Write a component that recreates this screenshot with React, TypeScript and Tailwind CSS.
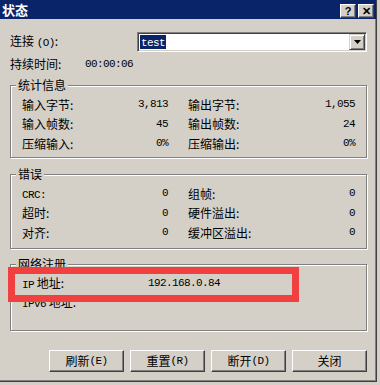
import React from "react";

const Mono = ({ children }: { children: React.ReactNode }) => (
  <span className="font-['Liberation_Mono',monospace] text-[11px] tracking-[-0.6px]">{children}</span>
);

function Group({
  title,
  className,
  children,
}: {
  title: string;
  className: string;
  children: React.ReactNode;
}) {
  return (
    <div
      className={`relative border border-[#808080] shadow-[1px_1px_0_#ffffff,inset_1px_1px_0_#ffffff] ${className}`}
    >
      <span className="absolute -top-[8px] left-[5px] bg-[#d4d0c8] px-[2px] leading-[14px]">{title}</span>
      {children}
    </div>
  );
}

function Cell({ label, value }: { label: React.ReactNode; value: string }) {
  return (
    <div className="flex h-[19.5px] items-center justify-between leading-none">
      <span>{label}</span>
      <Mono>{value}</Mono>
    </div>
  );
}

function Btn({ children }: { children: React.ReactNode }) {
  return (
    <div className="flex h-[22px] w-[75px] items-center justify-center border border-t-white border-l-white border-r-[#404040] border-b-[#404040] bg-[#d4d0c8] leading-none shadow-[inset_-1px_-1px_0_#808080]">
      {children}
    </div>
  );
}

function TitleBtn({ children }: { children: React.ReactNode }) {
  return (
    <div className="flex h-[14px] w-[16px] items-center justify-center border border-t-white border-l-white border-r-[#404040] border-b-[#404040] bg-[#d4d0c8] text-[11px] font-bold leading-none text-black shadow-[inset_-1px_-1px_0_#808080] font-['Liberation_Sans',sans-serif]">
      {children}
    </div>
  );
}

export default function App() {
  return (
    <div className="h-[385px] w-[380px] bg-[#d4d0c8] font-['Noto_Sans_CJK_SC','Noto_Sans',sans-serif] text-[12px] text-black">
      <div className="flex h-[382px] w-[377px] flex-col border-r border-b border-r-[#404040] border-b-[#404040] shadow-[inset_-1px_-1px_0_#808080]">
        {/* title bar */}
        <div className="flex h-[19px] items-start justify-between bg-[#0a246a] pr-[2px]">
          <span className="pl-[2px] pt-[2px] text-[13px] font-bold leading-[15px] text-white">状态</span>
          <div className="flex gap-[2px] pt-[4px]">
            <TitleBtn>?</TitleBtn>
            <TitleBtn>✕</TitleBtn>
          </div>
        </div>

        <div className="flex flex-col pl-[10px]">
          {/* connection */}
          <div className="mt-[13px] flex h-[20px] items-center">
            <span className="w-[127px] leading-none">
              连接 <Mono>(O)</Mono>:
            </span>
            <div className="flex h-[20px] w-[230px] items-center justify-between border border-t-[#808080] border-l-[#808080] border-r-white border-b-white bg-white pl-[1px] pr-[1px] shadow-[inset_1px_1px_0_#404040,inset_-1px_-1px_0_#d4d0c8]">
              <span className="ml-[1px] bg-[#0a246a] px-[1px] leading-[12px] text-white">
                <Mono>test</Mono>
              </span>
              <div className="flex h-[16px] w-[16px] items-center justify-center border border-t-[#d4d0c8] border-l-[#d4d0c8] border-r-[#404040] border-b-[#404040] bg-[#d4d0c8] shadow-[inset_1px_1px_0_#ffffff,inset_-1px_-1px_0_#808080]">
                <svg width="7" height="4" viewBox="0 0 7 4">
                  <path d="M0 0h7L3.5 4z" fill="#000" />
                </svg>
              </div>
            </div>
          </div>

          {/* duration */}
          <div className="mt-[6px] flex h-[12px] items-center leading-none">
            <span className="w-[75px]">持续时间:</span>
            <Mono>00:00:06</Mono>
          </div>

          {/* statistics */}
          <Group title="统计信息" className="mt-[15px] h-[73px] w-[357px]">
            <div className="grid grid-cols-[146px_167px] gap-x-[20px] px-[11px] pt-[9px]">
              <Cell label="输入字节:" value="3,813" />
              <Cell label="输出字节:" value="1,055" />
              <Cell label="输入帧数:" value="45" />
              <Cell label="输出帧数:" value="24" />
              <Cell label="压缩输入:" value="0%" />
              <Cell label="压缩输出:" value="0%" />
            </div>
          </Group>

          {/* errors */}
          <Group title="错误" className="mt-[16px] h-[75px] w-[357px]">
            <div className="grid grid-cols-[146px_167px] gap-x-[20px] px-[11px] pt-[9px]">
              <Cell label={<Mono>CRC:</Mono>} value="0" />
              <Cell label="组帧:" value="0" />
              <Cell label="超时:" value="0" />
              <Cell label="硬件溢出:" value="0" />
              <Cell label="对齐:" value="0" />
              <Cell label="缓冲区溢出:" value="0" />
            </div>
          </Group>

          {/* network */}
          <Group title="网络注册" className="mt-[15px] h-[67px] w-[357px]">
            <div className="flex flex-col px-[11px] pt-[9px]">
              <div className="flex h-[19.5px] items-center leading-none">
                <span className="w-[126px]">
                  <Mono>IP</Mono> 地址:
                </span>
                <Mono>192.168.0.84</Mono>
              </div>
              <div className="flex h-[19.5px] items-center leading-none">
                <span>
                  <Mono>IPv6</Mono> 地址:
                </span>
              </div>
            </div>
            <div className="pointer-events-none absolute -left-[3px] top-[2px] h-[35px] w-[291px] border-[7px] border-[#f04040]" />
          </Group>

          {/* buttons */}
          <div className="mt-[19px] flex w-[357px] justify-end gap-[6px]">
            <Btn>
              刷新 <Mono>(E)</Mono>
            </Btn>
            <Btn>
              重置 <Mono>(R)</Mono>
            </Btn>
            <Btn>
              断开 <Mono>(D)</Mono>
            </Btn>
            <Btn>关闭</Btn>
          </div>
        </div>
      </div>
    </div>
  );
}
